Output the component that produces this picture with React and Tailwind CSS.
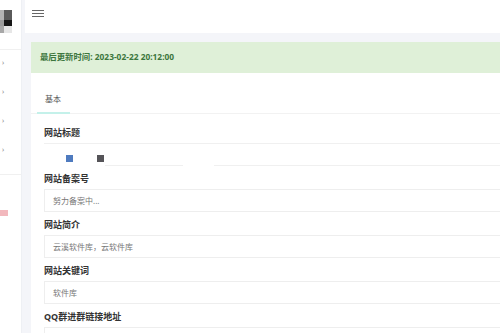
import React from 'react';

const FIELDS = [
  { label: '网站备案号', value: '努力备案中...' },
  { label: '网站简介', value: '云溪软件库，云软件库' },
  { label: '网站关键词', value: '软件库' },
];

const Field = ({ label, children }) => (
  <div className="mb-[7px]">
    <p className="text-[9px] font-bold text-[#333] leading-[12px] mb-[4px]">{label}</p>
    {children}
  </div>
);

export default function App() {
  return (
    <div
      className="flex w-[500px] h-[333px] overflow-hidden bg-[#f4f5f9]"
      style={{ fontFamily: '"Noto Sans", "Noto Sans CJK SC", sans-serif' }}
    >
      {/* Sidebar */}
      <aside className="w-[22px] shrink-0 bg-white border-r border-[#eef0f4] flex flex-col">
        <div className="h-[50px] border-b border-[#f0f0f0] pt-[10px]">
          <div className="grid grid-cols-[4px_8px] grid-rows-[10px_6px_7px] w-[12px]">
            <div className="bg-[#b4b4b4]" />
            <div className="bg-[#5a5a5a]" />
            <div className="bg-[#9c9c9c]" />
            <div className="bg-[#161616]" />
            <div className="bg-[#a8a8a8]" />
            <div className="bg-[#e6e6e6]" />
          </div>
        </div>
        <div className="flex flex-col text-[7px] leading-none text-[#888] pl-[2px] pt-[9px] gap-[22px] h-[125px] border-b border-[#f0f0f0]">
          <span>›</span>
          <span>›</span>
          <span>›</span>
          <span>›</span>
        </div>
        <div className="mt-[35px] w-[8px] h-[6px] bg-[#f2b8bd]" />
      </aside>

      {/* Main */}
      <div className="flex-1 flex flex-col min-w-0">
        <header className="h-[33px] shrink-0 bg-white ml-[3px] flex items-start pl-[7px] pt-[10px]">
          <svg width="12" height="7" viewBox="0 0 12 7">
            <path d="M0 .5h12M0 3.5h12M0 6.5h12" stroke="#666" strokeWidth="1" />
          </svg>
        </header>

        <div className="flex-1 pl-[9px] pt-[9px] min-h-0">
          <div className="bg-white h-full">
            <div className="h-[31px] bg-[#dff0d8] flex items-center pl-[9px]">
              <span className="text-[8.4px] font-bold text-[#3c763d]">最后更新时间: 2023-02-22 20:12:00</span>
            </div>

            <div className="h-[41px] border-b border-[#f2f2f2] relative flex items-end">
              <span className="text-[8px] text-[#555] ml-[14px] mb-[8px]">基本</span>
              <div className="absolute left-[6px] bottom-[-1px] w-[33px] h-[2px] bg-[#c4f1ea]" />
            </div>

            <div className="pl-[13px] pt-[13px]">
              <Field label="网站标题">
                <div className="h-[23px] border-t border-[#f0f0f0] relative">
                  <div className="absolute left-[22px] top-[11px] w-[7px] h-[7px] bg-[#4f7bbf]" />
                  <div className="absolute left-[53px] top-[11px] w-[7px] h-[7px] bg-[#555458]" />
                  <div className="absolute left-[61px] right-0 bottom-0 h-[1px] bg-[#f0f0f0]" />
                  <div className="absolute left-[139px] w-[31px] bottom-0 h-[1px] bg-white" />
                </div>
              </Field>
              {FIELDS.map((f) => (
                <Field key={f.label} label={f.label}>
                  <div className="h-[23px] border border-r-0 border-[#eeeeee] flex items-center pl-[8px]">
                    <span className="text-[8px] text-[#777]">{f.value}</span>
                  </div>
                </Field>
              ))}
              <Field label="QQ群进群链接地址">
                <div className="h-[23px] border border-r-0 border-[#eeeeee]" />
              </Field>
            </div>
          </div>
        </div>
      </div>
    </div>
  );
}
